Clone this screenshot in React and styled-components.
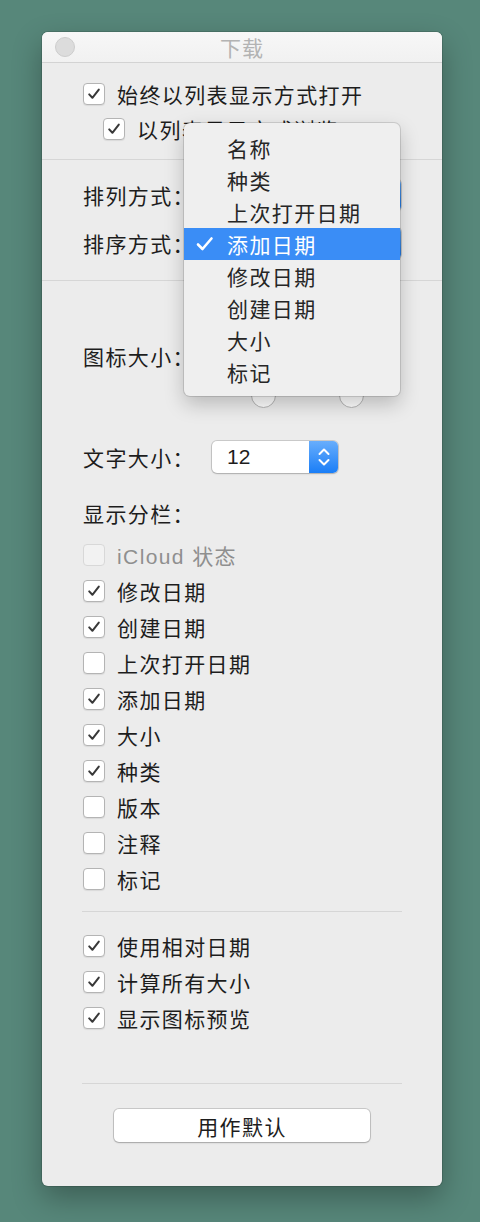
import React from "react";
import styled, { createGlobalStyle } from "styled-components";

const GlobalStyle = createGlobalStyle`
  html, body {
    margin: 0;
    padding: 0;
    background: #57877a;
  }
  body {
    font-family: "Liberation Sans", "Noto Sans CJK SC", sans-serif;
    color: #1d1d1d;
  }
`;

const Desktop = styled.div`
  width: 480px;
  height: 1222px;
  padding: 32px 0 0 42px;
  box-sizing: border-box;
`;

const Window = styled.div`
  position: relative;
  width: 400px;
  height: 1154px;
  background: #ececec;
  border-radius: 6px;
  display: flex;
  flex-direction: column;
  box-shadow: 0 0 0 1px rgba(0, 0, 0, 0.12), 0 12px 30px rgba(0, 0, 0, 0.3);
`;

const TitleBar = styled.div`
  height: 31px;
  box-sizing: border-box;
  display: flex;
  align-items: center;
  padding-left: 13px;
  background: linear-gradient(#f7f7f7, #f1f1f1);
  border-bottom: 1px solid #d3d3d3;
  border-radius: 6px 6px 0 0;
`;

const CloseDot = styled.span`
  width: 20px;
  height: 20px;
  border-radius: 50%;
  background: #dcdcdc;
  border: 1px solid #cdcdcd;
  box-sizing: border-box;
`;

const Title = styled.div`
  flex: 1;
  text-align: center;
  margin-right: 33px;
  font-size: 21px;
  color: #b3b3b3;
  letter-spacing: 1px;
`;

const Section = styled.div`
  display: flex;
  flex-direction: column;
  padding: ${(p) => p.$pad};
  gap: ${(p) => p.$gap || 0}px;
  border-bottom: ${(p) => (p.$line ? "1px solid #d6d6d6" : "none")};
`;

const CheckRow = styled.label`
  display: flex;
  align-items: center;
  height: ${(p) => p.$h || 36}px;
  padding-left: ${(p) => p.$indent || 0}px;
  font-size: 21px;
  letter-spacing: 1.4px;
  color: ${(p) => (p.$disabled ? "#8f8f8f" : "#1d1d1d")};
`;

const Box = styled.span`
  width: 22px;
  height: 22px;
  flex: none;
  box-sizing: border-box;
  border-radius: 4px;
  margin-right: 12px;
  background: ${(p) => (p.$disabled ? "#f2f2f2" : "#ffffff")};
  border: 1px solid ${(p) => (p.$disabled ? "#d8d8d8" : "#b4b4b4")};
  box-shadow: ${(p) => (p.$disabled ? "none" : "0 1px 1px rgba(0,0,0,0.08)")};
  display: flex;
  align-items: center;
  justify-content: center;
`;

const FieldRow = styled.div`
  display: flex;
  align-items: center;
  height: ${(p) => p.$h || 30}px;
  margin-top: ${(p) => p.$mt || 0}px;
  font-size: 21px;
  letter-spacing: 1.4px;
`;

const FieldLabel = styled.span`
  width: ${(p) => (p.$w ? `${p.$w}px` : "auto")};
  flex: none;
  margin-bottom: ${(p) => p.$mb || 0}px;
`;

const Popup = styled.div`
  width: ${(p) => p.$w}px;
  height: 32px;
  box-sizing: border-box;
  display: flex;
  align-items: center;
  background: #fff;
  border-radius: 5px;
  box-shadow: 0 0 0 1px rgba(0, 0, 0, 0.14), 0 1px 2px rgba(0, 0, 0, 0.15);
  overflow: hidden;
`;

const PopupValue = styled.span`
  flex: 1;
  padding-left: 15px;
  font-size: 21px;
  letter-spacing: 0;
  color: #1d1d1d;
`;

const Stepper = styled.span`
  width: 29px;
  height: 100%;
  background: linear-gradient(#68aefc, #1a7ef7);
  display: flex;
  align-items: center;
  justify-content: center;
`;

const IconSizeRow = styled.div`
  display: grid;
  grid-template-columns: 122px 60px 60px;
  column-gap: 28px;
  align-items: center;
  margin-top: 29px;
  font-size: 21px;
  letter-spacing: 1.4px;
`;

const IconChoice = styled.div`
  display: flex;
  flex-direction: column;
  align-items: center;
  gap: 13px;
`;

const IconArt = styled.div`
  height: 60px;
  display: flex;
  align-items: flex-end;
  justify-content: center;
`;

const Radio = styled.span`
  width: 25px;
  height: 25px;
  box-sizing: border-box;
  border-radius: 50%;
  background: #fff;
  border: 1px solid #b6b6b6;
`;

const Heading = styled.div`
  margin-top: 29px;
  line-height: 26px;
  font-size: 21px;
  letter-spacing: 1.4px;
`;

const Divider = styled.div`
  height: 1px;
  background: #d6d6d6;
  margin: ${(p) => p.$m};
`;

const DefaultButton = styled.button`
  align-self: center;
  width: 256px;
  height: 33px;
  margin: 25px 0 0 -41px;
  background: #fff;
  border: none;
  border-radius: 5px;
  box-shadow: 0 0 0 1px rgba(0, 0, 0, 0.15), 0 1px 2px rgba(0, 0, 0, 0.18);
  font-family: inherit;
  font-size: 21px;
  letter-spacing: 1.4px;
  color: #1d1d1d;
  padding: 0;
`;

const Menu = styled.div`
  position: absolute;
  top: 91px;
  left: 142px;
  width: 216px;
  padding: 9px 0 8px;
  background: #efefef;
  border-radius: 6px;
  box-shadow: 0 0 0 1px rgba(0, 0, 0, 0.12), 0 8px 20px rgba(0, 0, 0, 0.22);
`;

const MenuItem = styled.div`
  position: relative;
  height: 32px;
  display: flex;
  align-items: center;
  padding-left: 43px;
  font-size: 21px;
  letter-spacing: 1.4px;
  color: ${(p) => (p.$active ? "#ffffff" : "#262626")};
  background: ${(p) => (p.$active ? "#3a8df6" : "transparent")};
`;

const MenuCheck = styled.svg`
  position: absolute;
  left: 12px;
  top: 8px;
`;

const Check = ({ color = "#383838" }) => (
  <svg width="14" height="14" viewBox="0 0 14 14">
    <path
      d="M2.2 7.4 L5.4 10.8 L11.8 2.6"
      fill="none"
      stroke={color}
      strokeWidth="2"
      strokeLinecap="round"
      strokeLinejoin="round"
    />
  </svg>
);

const Chevrons = () => (
  <svg width="14" height="22" viewBox="0 0 14 22">
    <path
      d="M2.5 8 L7 3.5 L11.5 8 M2.5 14 L7 18.5 L11.5 14"
      fill="none"
      stroke="#fff"
      strokeWidth="2"
      strokeLinecap="round"
      strokeLinejoin="round"
    />
  </svg>
);

const DocIcon = ({ size }) => (
  <svg width={size * 0.8} height={size} viewBox="0 0 16 20">
    <path d="M1 1 H10 L15 6 V19 H1 Z" fill="#fff" stroke="#9a9a9a" />
  </svg>
);

const CheckItem = ({ label, checked, disabled, indent, h }) => (
  <CheckRow $disabled={disabled} $indent={indent} $h={h}>
    <Box $disabled={disabled}>{checked && <Check />}</Box>
    {label}
  </CheckRow>
);

const columns = [
  ["iCloud 状态", false, true],
  ["修改日期", true],
  ["创建日期", true],
  ["上次打开日期", false],
  ["添加日期", true],
  ["大小", true],
  ["种类", true],
  ["版本", false],
  ["注释", false],
  ["标记", false],
];

const options = [
  ["使用相对日期", true],
  ["计算所有大小", true],
  ["显示图标预览", true],
];

const menuItems = ["名称", "种类", "上次打开日期", "添加日期", "修改日期", "创建日期", "大小", "标记"];

const App = () => {
  return (
    <>
      <GlobalStyle />
      <Desktop>
        <Window>
          <TitleBar>
            <CloseDot />
            <Title>下载</Title>
          </TitleBar>

          <Section $pad="13px 0 13px 41px" $line>
            <CheckItem label="始终以列表显示方式打开" checked h={35} />
            <CheckItem label="以列表显示方式浏览" checked indent={20} h={35} />
          </Section>

          <Section $pad="20px 41px 22px 41px" $gap={18} $line>
            <FieldRow>
              <FieldLabel $w={118}>排列方式：</FieldLabel>
              <Popup $w={200}>
                <PopupValue>无</PopupValue>
                <Stepper>
                  <Chevrons />
                </Stepper>
              </Popup>
            </FieldRow>
            <FieldRow>
              <FieldLabel $w={118}>排序方式：</FieldLabel>
              <Popup $w={200}>
                <PopupValue>添加日期</PopupValue>
                <Stepper>
                  <Chevrons />
                </Stepper>
              </Popup>
            </FieldRow>
          </Section>

          <Section $pad="0 0 43px 41px">
            <IconSizeRow>
              <FieldLabel $mb={7}>图标大小：</FieldLabel>
              <IconChoice>
                <IconArt>
                  <DocIcon size={22} />
                </IconArt>
                <Radio />
              </IconChoice>
              <IconChoice>
                <IconArt>
                  <DocIcon size={44} />
                </IconArt>
                <Radio />
              </IconChoice>
            </IconSizeRow>

            <FieldRow $h={32} $mt={33}>
              <FieldLabel $w={129}>文字大小：</FieldLabel>
              <Popup $w={126}>
                <PopupValue>12</PopupValue>
                <Stepper>
                  <Chevrons />
                </Stepper>
              </Popup>
            </FieldRow>

            <Heading>显示分栏：</Heading>
            <Section $pad="9px 0 0 0">
              {columns.map(([label, checked, disabled]) => (
                <CheckItem key={label} label={label} checked={checked} disabled={disabled} />
              ))}
            </Section>

            <Divider $m="14px 40px 16px -1px" />

            {options.map(([label, checked]) => (
              <CheckItem key={label} label={label} checked={checked} />
            ))}

            <Divider $m="47px 40px 0 -1px" />

            <DefaultButton>用作默认</DefaultButton>
          </Section>

          <Menu>
            {menuItems.map((item) => {
              const active = item === "添加日期";
              return (
                <MenuItem key={item} $active={active}>
                  {active && (
                    <MenuCheck width="18" height="16" viewBox="0 0 18 16">
                      <path
                        d="M2 8.5 L6.5 13 L15.5 2.5"
                        fill="none"
                        stroke="#fff"
                        strokeWidth="2.6"
                        strokeLinecap="round"
                        strokeLinejoin="round"
                      />
                    </MenuCheck>
                  )}
                  {item}
                </MenuItem>
              );
            })}
          </Menu>
        </Window>
      </Desktop>
    </>
  );
};

export default App;
